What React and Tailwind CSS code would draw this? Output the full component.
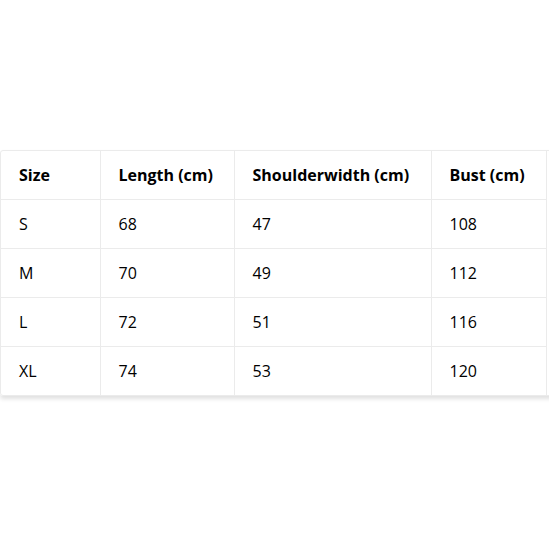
const headers = ['Size', 'Length (cm)', 'Shoulderwidth (cm)', 'Bust (cm)']

const rows = [
  ['S', '68', '47', '108'],
  ['M', '70', '49', '112'],
  ['L', '72', '51', '116'],
  ['XL', '74', '53', '120'],
]

const widths = ['w-[99px]', 'w-[134px]', 'w-[197px]', 'w-[115px]']

export default function App() {
  return (
    <div className="w-[549px] h-[549px] bg-white overflow-hidden pt-[150px] font-['Open_Sans',sans-serif] text-[16px] text-black">
      <div className="w-[700px] rounded-[3px] border border-[#ebebeb] shadow-[0_3px_4px_rgba(0,0,0,0.12)]">
        <table className="border-collapse table-fixed">
          <thead>
            <tr className="h-[48px]">
              {headers.map((h, i) => (
                <th key={h} className={`${widths[i]} text-left font-bold px-[18px] border-r border-[#ebebeb]`}>
                  {h}
                </th>
              ))}
            </tr>
          </thead>
          <tbody>
            {rows.map(r => (
              <tr key={r[0]} className="h-[49px] border-t border-[#ebebeb]">
                {r.map((c, i) => (
                  <td key={i} className={`${widths[i]} px-[18px] border-r border-[#ebebeb]`}>
                    {c}
                  </td>
                ))}
              </tr>
            ))}
          </tbody>
        </table>
      </div>
    </div>
  )
}
